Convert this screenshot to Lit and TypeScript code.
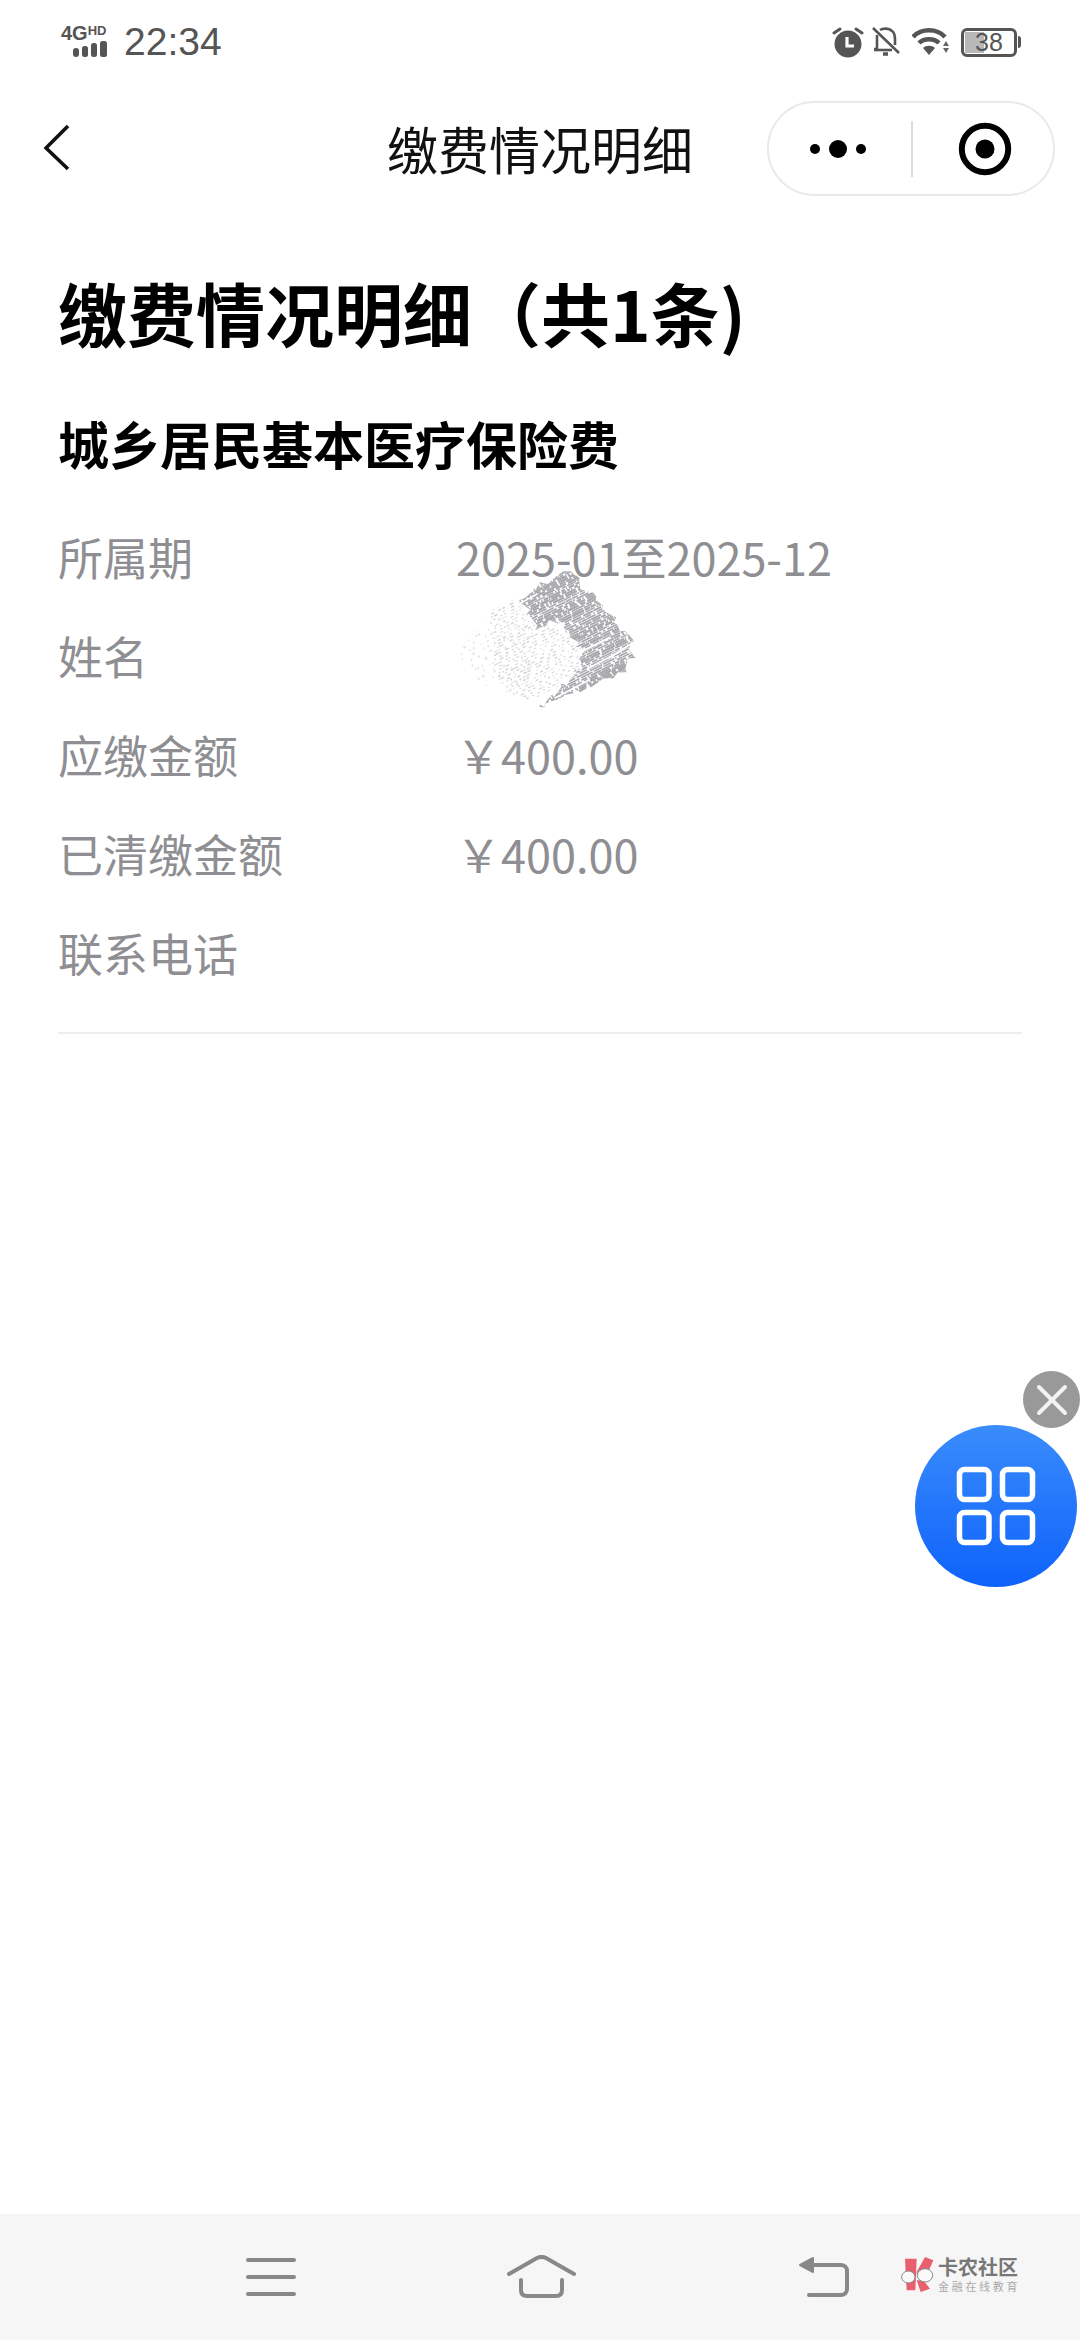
import { LitElement, html, css, svg } from "lit";
import { customElement } from "lit/decorators.js";

function makeRnd(seed: number) {
  let s = seed;
  return () => {
    s = (s * 1664525 + 1013904223) % 4294967296;
    return s / 4294967296;
  };
}

function scribbleLines(seed: number, count: number, dashScale: number, gapScale: number) {
  const rnd = makeRnd(seed);
  const out: { y: number; dash: string; w: number }[] = [];
  for (let i = 0; i < count; i++) {
    const parts: string[] = [];
    for (let k = 0; k < 14; k++) {
      parts.push((1 + rnd() * dashScale).toFixed(1), (0.5 + rnd() * gapScale).toFixed(1));
    }
    out.push({ y: -110 + (i * 330) / count, dash: parts.join(" "), w: 0.7 + rnd() * 1.1 });
  }
  return out;
}

function jagged(seed: number, pts: number[][], step: number, amp: number) {
  const rnd = makeRnd(seed);
  const out: string[] = [];
  pts.forEach((p, i) => {
    const q = pts[(i + 1) % pts.length];
    const len = Math.hypot(q[0] - p[0], q[1] - p[1]);
    const n = Math.max(1, Math.round(len / step));
    for (let k = 0; k < n; k++) {
      const t = k / n;
      const jx = (rnd() - 0.5) * amp;
      const jy = (rnd() - 0.5) * amp;
      out.push(`${(p[0] + (q[0] - p[0]) * t + jx).toFixed(1)},${(p[1] + (q[1] - p[1]) * t + jy).toFixed(1)}`);
    }
  });
  return out.join(" ");
}

const DARK = scribbleLines(17, 130, 14, 2.2);
const LIGHT = scribbleLines(91, 100, 3, 7);
const FAINT = scribbleLines(53, 60, 1.5, 14);
const DARK_POLY = jagged(
  5,
  [[63, 30], [110, 2], [130, 27], [176, 72], [170, 100], [130, 117], [80, 142], [112, 112], [122, 96], [120, 77], [100, 53], [77, 60]],
  5,
  9
);
const LIGHT_POLY = jagged(
  9,
  [[34, 46], [62, 30], [76, 60], [100, 54], [120, 76], [120, 106], [66, 132], [34, 110]],
  6,
  10
);
const FAINT_POLY = jagged(13, [[0, 84], [34, 46], [70, 60], [70, 132], [0, 104]], 6, 8);

@customElement("app-root")
export class AppRoot extends LitElement {
  static styles = css`
    :host {
      display: flex;
      flex-direction: column;
      position: relative;
      width: 1080px;
      height: 2340px;
      background: #fff;
      font-family: "Noto Sans CJK SC", "Noto Sans", sans-serif;
      overflow: hidden;
    }
    svg { display: block; }
    .status {
      height: 84px;
      display: flex;
      align-items: center;
      padding: 0 61px;
      color: #555;
      flex: none;
    }
    .net { width: 46px; height: 32px; position: relative; margin-right: 17px; margin-top: -2px; }
    .net-text {
      position: absolute;
      left: 0;
      top: -1px;
      font: 700 20px/18px "Liberation Sans", sans-serif;
      color: #555;
      white-space: nowrap;
    }
    .net-text sup { font-size: 13px; line-height: 12px; vertical-align: 5px; }
    .net svg { position: absolute; left: 12px; top: 15px; }
    .time {
      font: 400 39px/44px "Liberation Sans", sans-serif;
      color: #555;
    }
    .status-right { margin-left: auto; display: flex; align-items: center; margin-right: -2px; }
    .alarm { margin-right: 8px; }
    .bell { margin-right: 12px; }
    .wifi { margin-right: 12px; }
    .battery {
      width: 56px;
      height: 29px;
      box-sizing: border-box;
      border: 3px solid #555;
      border-radius: 6px;
      position: relative;
      display: flex;
      align-items: center;
      justify-content: center;
      font: 400 25px/25px "Liberation Sans", sans-serif;
      color: #555;
    }
    .battery-fill {
      position: absolute;
      left: 1px;
      top: 1px;
      bottom: 1px;
      width: 19px;
      background: #b8b8b8;
    }
    .battery-num { position: relative; }
    .battery-tip {
      width: 3px;
      height: 12px;
      background: #555;
      border-radius: 0 3px 3px 0;
      margin-left: 1px;
    }
    .nav {
      height: 128px;
      flex: none;
      display: grid;
      grid-template-columns: 1fr auto 1fr;
      align-items: center;
    }
    .back { margin-left: 44px; }
    .nav-title {
      font-size: 51px;
      line-height: 70px;
      color: #111;
      white-space: nowrap;
    }
    .capsule {
      justify-self: end;
      margin-right: 25px;
      width: 288px;
      height: 95px;
      box-sizing: border-box;
      border: 2px solid #e9e9e9;
      border-radius: 48px;
      background: #fff;
    }
    .main { flex: 1; padding: 50px 58px 0; }
    h1 {
      margin: 0;
      font-size: 69px;
      line-height: 100px;
      font-weight: 700;
      color: #000;
      white-space: nowrap;
    }
    h2 {
      margin: 46px 0 29px;
      font-size: 51px;
      line-height: 70px;
      font-weight: 700;
      color: #000;
      white-space: nowrap;
    }
    .rows { border-bottom: 2px solid #eeeeee; padding-bottom: 30px; }
    .row {
      display: grid;
      grid-template-columns: 398px 1fr;
      height: 99px;
      align-items: center;
      font-size: 45px;
      line-height: 60px;
      color: #8e8e93;
    }
    .val { position: relative; height: 60px; white-space: nowrap; }
    .scribble { position: absolute; left: 3px; top: -58px; }
    .fab-close {
      position: absolute;
      left: 1023px;
      top: 1371px;
      width: 57px;
      height: 57px;
      border-radius: 50%;
      background: #999;
    }
    .fab {
      position: absolute;
      left: 915px;
      top: 1425px;
      width: 162px;
      height: 162px;
      border-radius: 50%;
      background: linear-gradient(#3a8cfb, #0e62fb);
    }
    .sysnav {
      height: 126px;
      flex: none;
      background: #f6f6f6;
      display: flex;
      align-items: center;
      padding-left: 246px;
    }
    .sys-home { margin-left: 211px; }
    .sys-back { margin-left: 222px; }
    .logo { margin-left: 51px; display: flex; align-items: center; margin-top: -6px; }
    .logo-text { margin-left: 3px; width: 82px; }
    .logo-a {
      font-size: 20px;
      line-height: 24px;
      font-weight: 700;
      color: #777;
      white-space: nowrap;
    }
    .logo-b {
      font-size: 11px;
      line-height: 14px;
      letter-spacing: 2.7px;
      color: #aaa;
      white-space: nowrap;
    }
  `;

  private scribble() {
    return html`<svg class="scribble" width="180" height="150" viewBox="0 0 180 150">
      <defs>
        <clipPath id="dark"><polygon points=${DARK_POLY}></polygon></clipPath>
        <clipPath id="light"><polygon points=${LIGHT_POLY}></polygon></clipPath>
        <clipPath id="faint"><polygon points=${FAINT_POLY}></polygon></clipPath>
      </defs>
      <g clip-path="url(#faint)" stroke="#e6e6e8">
        ${FAINT.map(
          (l) => svg`<line x1="-20" y1=${l.y + 70} x2="220" y2=${l.y - 50} stroke-width=${l.w + 1} stroke-dasharray=${l.dash}></line>`
        )}
      </g>
      <g clip-path="url(#light)" stroke="#d6d6d8">
        ${LIGHT.map(
          (l) => svg`<line x1="-20" y1=${l.y + 70} x2="220" y2=${l.y - 50} stroke-width=${l.w} stroke-dasharray=${l.dash}></line>`
        )}
      </g>
      <g clip-path="url(#dark)" stroke="#a8a8ad">
        ${DARK.map(
          (l) => svg`<line x1="-20" y1=${l.y + 70} x2="220" y2=${l.y - 50} stroke-width=${l.w + 0.8} stroke-dasharray=${l.dash}></line>`
        )}
      </g>
      <g stroke="#fff" stroke-width="1.6" stroke-linecap="round">
        <line x1="60" y1="36" x2="78" y2="26"></line>
        <line x1="118" y1="86" x2="150" y2="70"></line>
        <line x1="150" y1="90" x2="172" y2="76"></line>
        <line x1="96" y1="130" x2="130" y2="112"></line>
        <line x1="130" y1="100" x2="160" y2="84"></line>
      </g>
    </svg>`;
  }

  render() {
    return html`
      <div class="status">
        <div class="net">
          <div class="net-text">4G<sup>HD</sup></div>
          <svg width="34" height="18" viewBox="0 0 34 18" fill="#555">
            <rect x="0" y="8" width="6" height="9" rx="3"></rect>
            <rect x="9" y="6" width="6" height="11" rx="2.500"></rect>
            <rect x="18" y="3" width="6" height="14" rx="2.500"></rect>
            <rect x="27" y="1" width="7" height="16" rx="2.500"></rect>
          </svg>
        </div>
        <div class="time">22:34</div>
        <div class="status-right">
          <svg class="alarm" width="32" height="32" viewBox="0 0 32 32">
            <circle cx="16" cy="18" r="13.5" fill="#555"></circle>
            <path d="M15 11v9h7" fill="none" stroke="#fff" stroke-width="3.2"></path>
            <path d="M2 7l6-4M30 7l-6-4" stroke="#555" stroke-width="3" stroke-linecap="round"></path>
          </svg>
          <svg class="bell" width="28" height="30" viewBox="0 0 28 30" fill="none" stroke="#555" stroke-width="2.6">
            <path d="M5 8v14H2M8 3c3-2 9-2 12 1 3 2 3 6 3 9v5"></path>
            <path d="M2 23h18"></path>
            <path d="M1 1l26 25"></path>
            <path d="M11 27h5" stroke-width="3.500"></path>
          </svg>
          <svg class="wifi" width="37" height="30" viewBox="0 0 37 30">
            <path d="M1 10C9 1 25 1 33 10" fill="none" stroke="#555" stroke-width="4.500"></path>
            <path d="M7 16c5-5 15-5 20 0" fill="none" stroke="#555" stroke-width="4.500"></path>
            <path d="M11 21c3-3 9-3 12 0l-6 7z" fill="#555"></path>
            <path d="M34 14l3 5h-6zM31 21h6l-3 5z" fill="#666"></path>
          </svg>
          <div class="battery"><div class="battery-fill"></div><span class="battery-num">38</span></div>
          <div class="battery-tip"></div>
        </div>
      </div>

      <div class="nav">
        <svg class="back" width="26" height="48" viewBox="0 0 26 48" fill="none" stroke="#111" stroke-width="3.600">
          <path d="M24 2L2 24l22 21"></path>
        </svg>
        <div class="nav-title">缴费情况明细</div>
        <div class="capsule">
          <svg width="284" height="91" viewBox="0 0 284 91">
            <circle cx="46" cy="46" r="5" fill="#000"></circle>
            <circle cx="69" cy="46" r="9" fill="#000"></circle>
            <circle cx="92" cy="46" r="5" fill="#000"></circle>
            <rect x="142" y="18" width="2" height="56" fill="#dcdcdc"></rect>
            <circle cx="216" cy="46" r="23.200" fill="none" stroke="#000" stroke-width="6"></circle>
            <circle cx="216" cy="46" r="9.500" fill="#000"></circle>
          </svg>
        </div>
      </div>

      <div class="main">
        <h1>缴费情况明细（共1条)</h1>
        <h2>城乡居民基本医疗保险费</h2>
        <div class="rows">
          <div class="row"><div>所属期</div><div class="val">2025-01至2025-12</div></div>
          <div class="row"><div>姓名</div><div class="val">${this.scribble()}</div></div>
          <div class="row"><div>应缴金额</div><div class="val">￥400.00</div></div>
          <div class="row"><div>已清缴金额</div><div class="val">￥400.00</div></div>
          <div class="row"><div>联系电话</div><div class="val"></div></div>
        </div>
      </div>

      <div class="sysnav">
        <svg width="50" height="38" viewBox="0 0 50 38" stroke="#888" stroke-width="4" stroke-linecap="round">
          <path d="M2 2h46M2 19h46M2 36h46"></path>
        </svg>
        <svg class="sys-home" width="69" height="44" viewBox="0 0 69 44" fill="none" stroke="#888" stroke-width="4" stroke-linecap="round" stroke-linejoin="round">
          <path d="M2 19L30 3c3-1.500 6-1.500 9 0l28 16"></path>
          <path d="M14 25v10c0 4 2 6 6 6h29c4 0 6-2 6-6V25"></path>
        </svg>
        <svg class="sys-back" width="51" height="42" viewBox="0 0 51 42" fill="none">
          <path d="M2 9L15 2v14z" fill="#888" stroke="#888" stroke-width="2" stroke-linejoin="round"></path>
          <path d="M12 9h31c3 0 6 2 6 6v18c0 4-3 6-6 6H11" stroke="#888" stroke-width="4" stroke-linecap="round"></path>
        </svg>
        <div class="logo">
          <svg width="35" height="35" viewBox="0 0 105 105">
            <path d="M15 5H50L46 100H20Z" fill="#e8606e"></path>
            <path d="M50 45L75 0L100 10L80 55H50Z" fill="#e8606e"></path>
            <path d="M50 70H70L90 95L62 105Z" fill="#e8606e"></path>
            <ellipse cx="25" cy="60" rx="20" ry="18" fill="#fafafa" stroke="#888" stroke-width="3"></ellipse>
            <ellipse cx="75" cy="55" rx="23" ry="20" fill="#fafafa" stroke="#888" stroke-width="3"></ellipse>
          </svg>
          <div class="logo-text">
            <div class="logo-a">卡农社区</div>
            <div class="logo-b">金融在线教育</div>
          </div>
        </div>
      </div>

      <div class="fab-close">
        <svg width="57" height="57" viewBox="0 0 57 57" stroke="#f2f2f2" stroke-width="4" stroke-linecap="round">
          <path d="M16 16l26 26M42 16L16 42"></path>
        </svg>
      </div>
      <div class="fab">
        <svg width="162" height="162" viewBox="0 0 162 162" fill="none" stroke="#fff" stroke-width="5.500">
          <rect x="44.500" y="44.500" width="29.500" height="30" rx="5"></rect>
          <rect x="87.500" y="44.500" width="30" height="30" rx="5"></rect>
          <rect x="44.500" y="87.500" width="29.500" height="30" rx="5"></rect>
          <rect x="87.500" y="87.500" width="30" height="30" rx="5"></rect>
        </svg>
      </div>
    `;
  }
}
